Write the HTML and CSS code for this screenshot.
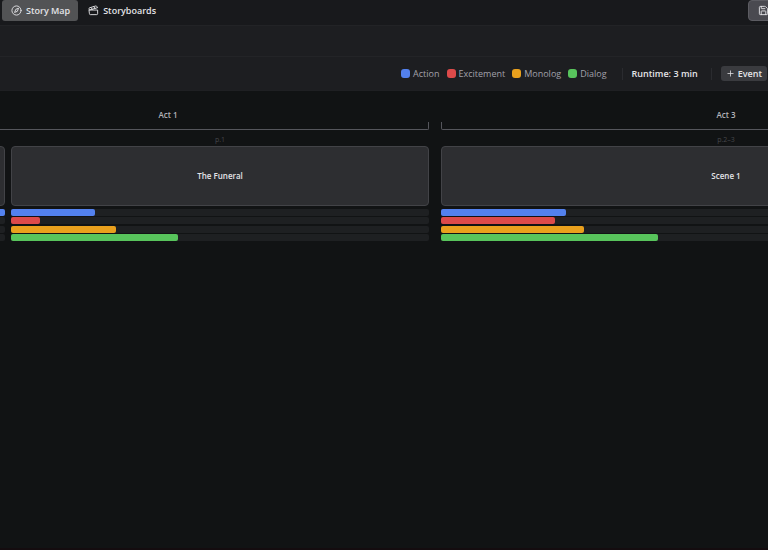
FILE: index.html
```html
<!DOCTYPE html>
<html lang="en">
<head>
  <meta charset="UTF-8">
  <title>Story Map</title>
  <link rel="stylesheet" href="styles.css">
</head>
<body>
  <header class="topbar">
    <nav class="tabs">
      <button class="tab active">
        <svg class="icon" viewBox="0 0 24 24"><circle cx="12" cy="12" r="10"/><path d="M16.2 7.8l-2.4 6-6 2.4 2.4-6z"/></svg>
        Story Map
      </button>
      <button class="tab">
        <svg class="icon" viewBox="0 0 24 24"><path d="M20.2 6L3 11l-.9-2.4c-.3-1.1.3-2.2 1.3-2.5l13.5-4c1.1-.3 2.2.3 2.5 1.3z"/><path d="M6.2 5.3l3.1 3.9M12.4 3.4l3.1 4"/><path d="M3 11h18v8a2 2 0 0 1-2 2H5a2 2 0 0 1-2-2z"/></svg>
        Storyboards
      </button>
    </nav>
    <button class="save" aria-label="Save">
      <svg class="icon" viewBox="0 0 24 24"><path d="M15.2 3a2 2 0 0 1 1.4.6l3.8 3.8a2 2 0 0 1 .6 1.4V19a2 2 0 0 1-2 2H5a2 2 0 0 1-2-2V5a2 2 0 0 1 2-2z"/><path d="M17 21v-7a1 1 0 0 0-1-1H8a1 1 0 0 0-1 1v7"/><path d="M7 3v4a1 1 0 0 0 1 1h7"/></svg>
    </button>
  </header>

  <div class="subbar"></div>

  <div class="toolbar">
    <ul class="legend">
      <li><span class="swatch action"></span>Action</li>
      <li><span class="swatch excitement"></span>Excitement</li>
      <li><span class="swatch monolog"></span>Monolog</li>
      <li><span class="swatch dialog"></span>Dialog</li>
    </ul>
    <div class="runtime">Runtime: 3 min</div>
    <button class="add-event">
      <svg class="icon" viewBox="0 0 24 24"><path d="M5 12h14M12 5v14"/></svg>
      Event
    </button>
  </div>

  <main class="board">
    <div class="track">
      <section class="act">
        <h2 class="act-title">Act 1</h2>
        <div class="bracket"></div>
        <div class="scenes">
          <article class="scene" style="width: 98px">
            <div class="page"></div>
            <div class="card"></div>
            <div class="meters">
              <div class="meter"><div class="fill action" style="width: 100%"></div></div>
              <div class="meter"></div>
              <div class="meter"></div>
              <div class="meter"></div>
            </div>
          </article>
          <article class="scene" style="width: 418px">
            <div class="page">p.1</div>
            <div class="card">The Funeral</div>
            <div class="meters">
              <div class="meter"><div class="fill action" style="width: 20%"></div></div>
              <div class="meter"><div class="fill excitement" style="width: 7%"></div></div>
              <div class="meter"><div class="fill monolog" style="width: 25%"></div></div>
              <div class="meter"><div class="fill dialog" style="width: 40%"></div></div>
            </div>
          </article>
        </div>
      </section>

      <section class="act">
        <h2 class="act-title">Act 3</h2>
        <div class="bracket"></div>
        <div class="scenes">
          <article class="scene" style="width: 570px">
            <div class="page">p.2–3</div>
            <div class="card">Scene 1</div>
            <div class="meters">
              <div class="meter"><div class="fill action" style="width: 22%"></div></div>
              <div class="meter"><div class="fill excitement" style="width: 20%"></div></div>
              <div class="meter"><div class="fill monolog" style="width: 25%"></div></div>
              <div class="meter"><div class="fill dialog" style="width: 38%"></div></div>
            </div>
          </article>
        </div>
      </section>
    </div>
  </main>
</body>
</html>
```

FILE: styles.css
```css
* {
  box-sizing: border-box;
}
body {
  margin: 0;
  min-height: 100vh;
  display: flex;
  flex-direction: column;
  overflow: hidden;
  background-color: #111314;
  border-bottom: 2px solid #140c0f;
  color: #e4e4e7;
  font-family: "Open Sans", "Noto Sans", sans-serif;
  font-size: 9px;
  line-height: 12px;
}
button {
  border: none;
  color: inherit;
  font: inherit;
  font-weight: 600;
  cursor: pointer;
}
.icon {
  width: 11px;
  height: 11px;
  flex: none;
  fill: none;
  stroke: currentColor;
  stroke-width: 2;
  stroke-linecap: round;
  stroke-linejoin: round;
}

/* top navigation */
.topbar {
  display: flex;
  justify-content: space-between;
  height: 26px;
  overflow: hidden;
  padding-left: 2px;
  background-color: #18191c;
  border-bottom: 1px solid #222326;
}
.tabs {
  display: flex;
  gap: 1px;
}
.tab {
  display: flex;
  align-items: center;
  gap: 4px;
  height: 21px;
  padding: 0 8px 0 9px;
  border-radius: 3px;
  background: none;
}
.tab.active {
  background-color: #525355;
}
.save {
  display: flex;
  align-items: center;
  height: 21px;
  padding: 0 9px;
  margin-right: -11px;
  border: 1px solid #5c5c62;
  border-radius: 4px;
  background-color: #4a4a50;
}
.subbar {
  height: 31px;
  background-color: #1d1e21;
  border-bottom: 1px solid #232427;
}

/* legend and actions */
.toolbar {
  display: flex;
  align-items: center;
  justify-content: flex-end;
  height: 34px;
  padding-right: 1px;
  background-color: #1d1e21;
  border-bottom: 1px solid #1f2023;
}
.legend {
  display: flex;
  gap: 7px;
  margin: 0;
  padding: 0 15px 0 0;
  list-style: none;
  color: #a1a1aa;
}
.legend li {
  display: flex;
  align-items: center;
  gap: 3px;
}
.swatch {
  width: 9px;
  height: 9px;
  border-radius: 3px;
}
.runtime {
  padding: 0 13px 0 9px;
  border-left: 1px solid #2a2b2f;
  border-right: 1px solid #2a2b2f;
  font-weight: 600;
}
.add-event {
  display: flex;
  align-items: center;
  gap: 3px;
  height: 15px;
  margin-left: 9px;
  padding: 0 5px;
  border-radius: 3px;
  background-color: #3a3b3f;
}
.add-event .icon {
  width: 9px;
  height: 9px;
}

.action {
  background-color: #5381ee;
}
.excitement {
  background-color: #dc4a4a;
}
.monolog {
  background-color: #e9a01d;
}
.dialog {
  background-color: #58c45c;
}

/* the map, scrolled a little to the right */
.board {
  flex: 1;
  overflow: hidden;
  padding-top: 18px;
}
.track {
  display: flex;
  gap: 12px;
  width: max-content;
  margin-left: -93px;
}
.act-title {
  margin: 0;
  color: #b4b4ba;
  font-size: 8px;
  font-weight: 600;
  text-align: center;
}
.bracket {
  height: 8px;
  margin-top: 1px;
  border: 1px solid #55565c;
  border-top: none;
  border-radius: 0 0 2px 2px;
}
.scenes {
  display: flex;
  gap: 6px;
  margin-top: 4px;
}
.page {
  height: 12px;
  color: #46474b;
  font-size: 7px;
  text-align: center;
}
.card {
  display: flex;
  align-items: center;
  justify-content: center;
  height: 60px;
  border: 1px solid #424347;
  border-radius: 4px;
  background-color: #2d2e31;
  font-size: 8px;
  font-weight: 600;
}
.meters {
  display: flex;
  flex-direction: column;
  justify-content: space-between;
  height: 32px;
  margin-top: 3px;
}
.meter {
  height: 7px;
  border-radius: 2px;
  background-color: #1e2022;
}
.fill {
  height: 100%;
  border-radius: 2px;
}
```
